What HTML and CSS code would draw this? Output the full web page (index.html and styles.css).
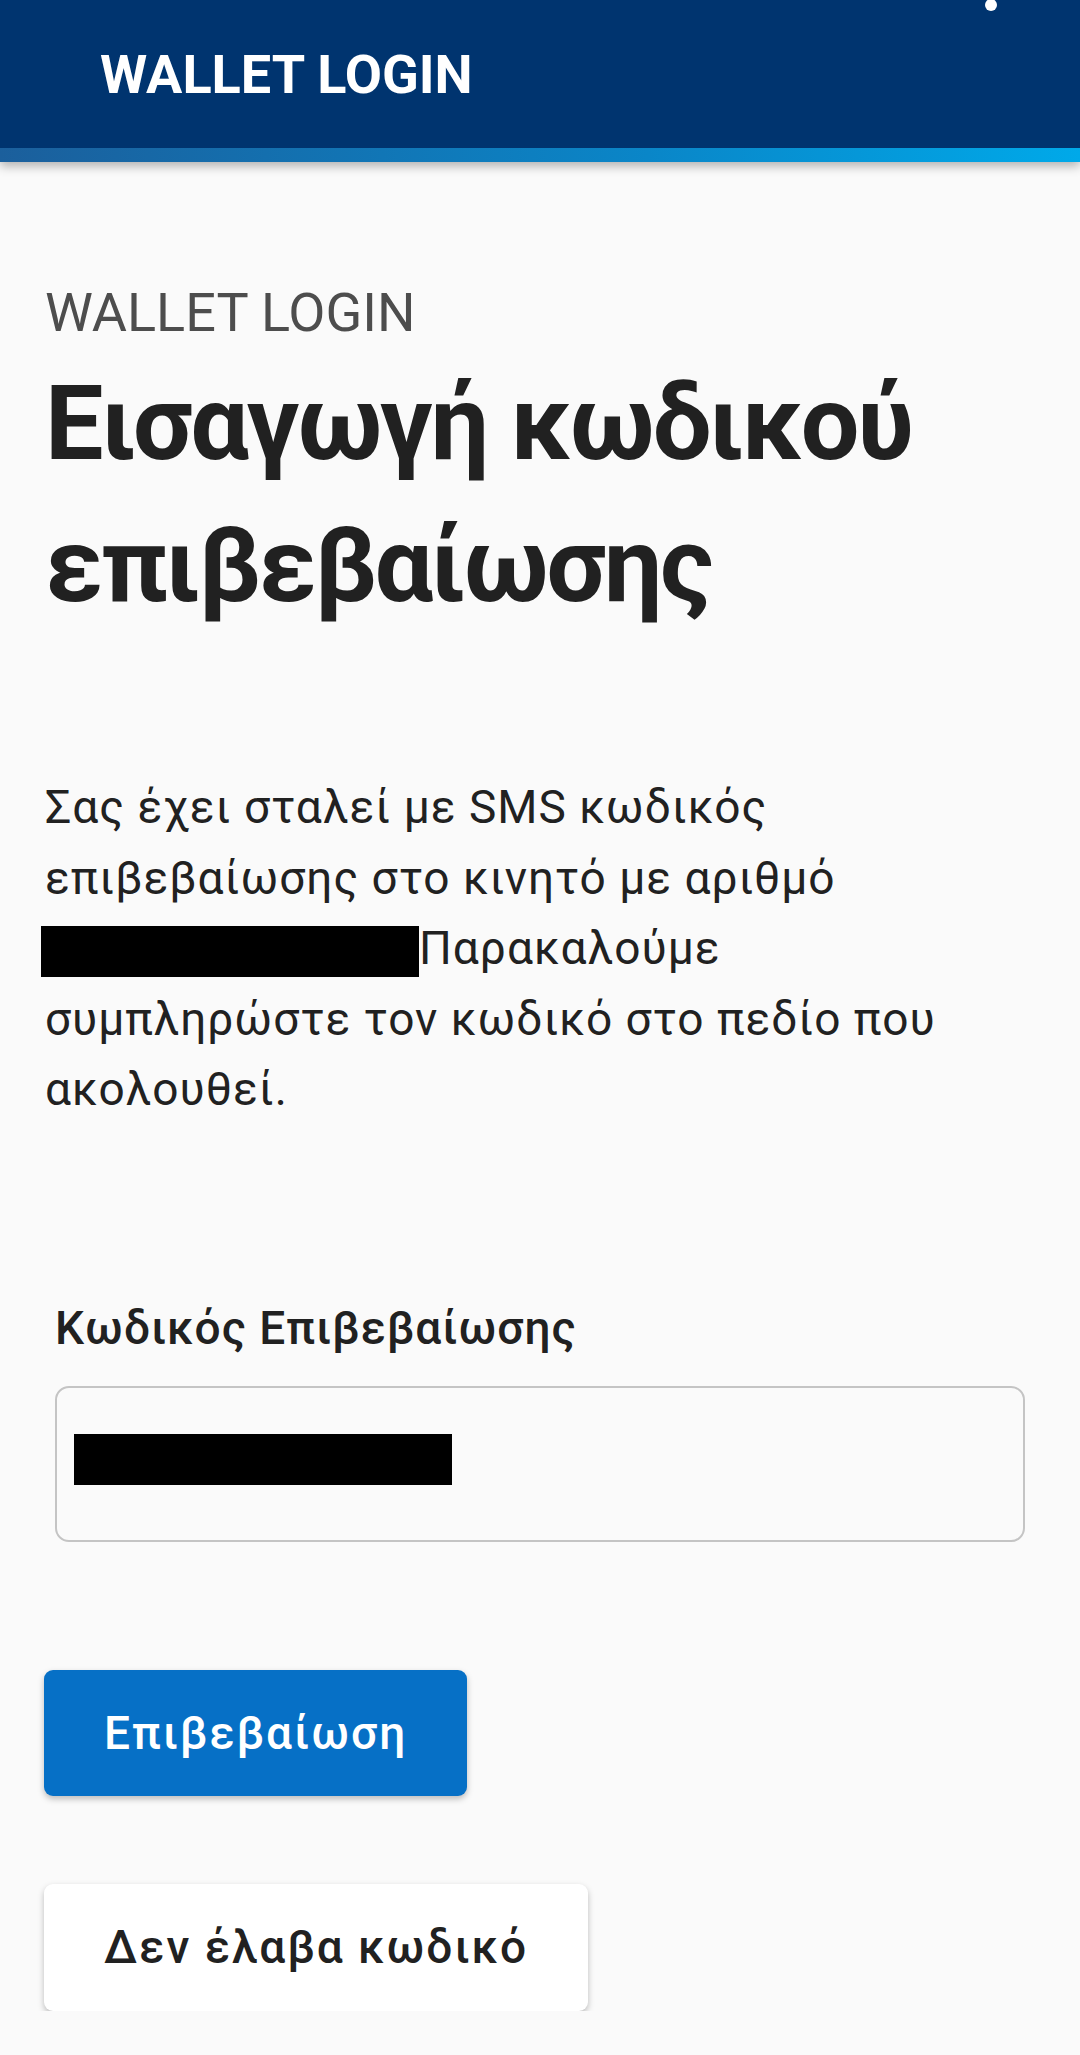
FILE: index.html
```html
<!DOCTYPE html>
<html lang="el">
<head>
  <meta charset="UTF-8" />
  <meta name="viewport" content="width=device-width, initial-scale=1" />
  <title>Wallet Login</title>
  <link rel="stylesheet" href="styles.css">
</head>
<body>
  <header class="app-bar">
    <div class="app-bar-main">
      <span class="app-bar-title">WALLET LOGIN</span>
      <span class="menu-dot"></span>
    </div>
    <div class="app-bar-stripe"></div>
  </header>

  <main class="content">
    <p class="eyebrow">WALLET LOGIN</p>
    <h1 class="title">Εισαγωγή κωδικού επιβεβαίωσης</h1>

    <p class="intro">Σας έχει σταλεί με SMS κωδικός επιβεβαίωσης στο κινητό με αριθμό <span class="redacted redacted-inline"></span>Παρακαλούμε συμπληρώστε τον κωδικό στο πεδίο που ακολουθεί.</p>

    <form class="code-form">
      <label class="field-label" for="code">Κωδικός Επιβεβαίωσης</label>
      <div class="field-box" id="code">
        <span class="redacted"></span>
      </div>

      <button type="submit" class="button button-primary">Επιβεβαίωση</button>
      <button type="button" class="button button-secondary">Δεν έλαβα κωδικό</button>
    </form>
  </main>
</body>
</html>
```

FILE: styles.css
```css
body {
  margin: 0;
  font-family: Roboto, 'Noto Sans', sans-serif;
  background: #fafafa;
  color: #212121;
}
.app-bar {
  position: relative;
  box-shadow: 0 4px 10px rgba(0, 0, 0, 0.3);
}
.app-bar-main {
  position: relative;
  height: 148px;
  background: #00346f;
  display: flex;
  align-items: center;
  padding-left: 100px;
}
.app-bar-title {
  color: white;
  font-weight: 700;
  font-size: 54px;
  letter-spacing: 0;
}
.menu-dot {
  position: absolute;
  left: 985px;
  top: -1px;
  width: 12px;
  height: 12px;
  border-radius: 50%;
  background: white;
}
.app-bar-stripe {
  height: 14px;
  background: linear-gradient(90deg, #1b5f9c, #0a86c8 60%, #00a9e9);
}
.content {
  padding: 0 45px;
}
.eyebrow {
  margin: 119px 0 0;
  font-size: 54px;
  line-height: 64px;
  color: #4d4d4d;
}
.title {
  margin: 8px 0 0;
  font-size: 104px;
  line-height: 142px;
  font-weight: 700;
  letter-spacing: -2.3px;
  color: #212121;
}
.intro {
  margin: 135px 0 0;
  font-size: 46px;
  line-height: 70.5px;
  letter-spacing: 1px;
  color: #212121;
}
.redacted {
  display: inline-block;
  width: 378px;
  height: 51px;
  background: #000;
}
.redacted-inline {
  margin-left: -4px;
  vertical-align: -13px;
}
.code-form {
  display: flex;
  flex-direction: column;
  align-items: flex-start;
}
.field-label {
  margin: 175px 10px 0;
  font-size: 46px;
  line-height: 56px;
  font-weight: 500;
  letter-spacing: 1px;
}
.field-box {
  align-self: stretch;
  margin: 30px 10px 0;
  height: 156px;
  border: 2px solid #c4c4c4;
  border-radius: 14px;
  display: flex;
  align-items: center;
  padding: 0 17px 9px;
  box-sizing: border-box;
}
.button {
  margin-left: -1px;
  height: 126px;
  padding: 0 60px;
  border: none;
  border-radius: 9px;
  font-family: inherit;
  font-size: 46px;
  font-weight: 500;
  letter-spacing: 2px;
  cursor: pointer;
  box-shadow: 0 3px 6px rgba(0, 0, 0, 0.25);
}
.button-primary {
  margin-top: 128px;
  background: #0670c6;
  color: white;
}
.button-secondary {
  margin-top: 88px;
  height: 127px;
  background: white;
  color: #212121;
}
```
